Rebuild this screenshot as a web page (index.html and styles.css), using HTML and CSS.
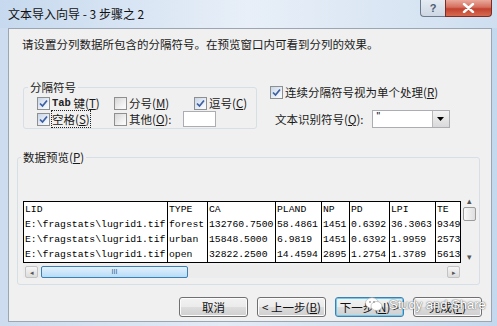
FILE: index.html
```html
<!DOCTYPE html>
<html lang="zh-CN">
<head>
    <meta charset="UTF-8">
    <title>文本导入向导 - 3 步骤之 2</title>
    <link rel="stylesheet" href="styles.css">
</head>
<body>
    <div class="window">
        <div class="titlebar">
            <span class="title">文本导入向导 - 3 步骤之 2</span>
            <div class="caption-buttons">
                <span class="cap-btn help">?</span>
                <span class="cap-btn close">
                    <svg width="13" height="10" viewBox="0 0 13 10"><path d="M2 1 L11 9 M11 1 L2 9" stroke="#fff" stroke-width="2.4" stroke-linecap="round"/></svg>
                </span>
            </div>
        </div>

        <div class="panel">
            <p class="intro">请设置分列数据所包含的分隔符号。在预览窗口内可看到分列的效果。</p>

            <div class="options">
                <!-- Delimiters group -->
                <fieldset class="group delimiters">
                    <legend>分隔符号</legend>
                    <div class="check-grid">
                        <label class="check"><span class="cb on"><svg viewBox="0 0 11 11"><path d="M2 5.5 L4.5 8 L9 2.5" /></svg></span><span class="mono">Tab</span>&nbsp;键(<u>T</u>)</label>
                        <label class="check"><span class="cb"></span>分号(<u>M</u>)</label>
                        <label class="check"><span class="cb on"><svg viewBox="0 0 11 11"><path d="M2 5.5 L4.5 8 L9 2.5" /></svg></span>逗号(<u>C</u>)</label>
                        <label class="check"><span class="cb on"><svg viewBox="0 0 11 11"><path d="M2 5.5 L4.5 8 L9 2.5" /></svg></span><span class="focus">空格(<u>S</u>)</span></label>
                        <label class="check other"><span class="cb"></span>其他(<u>O</u>):<span class="other-input"></span></label>
                    </div>
                </fieldset>

                <div class="right-opts">
                    <label class="check"><span class="cb on"><svg viewBox="0 0 11 11"><path d="M2 5.5 L4.5 8 L9 2.5" /></svg></span>连续分隔符号视为单个处理(<u>R</u>)</label>
                    <div class="qualifier">
                        <span>文本识别符号(<u>Q</u>):</span>
                        <div class="select">
                            <span class="select-value">"</span>
                            <span class="select-btn"><svg width="7" height="4" viewBox="0 0 7 4"><path d="M0 0 H7 L3.5 4 Z" fill="#000"/></svg></span>
                        </div>
                    </div>
                </div>
            </div>

            <!-- Data preview -->
            <fieldset class="group preview">
                <legend>数据预览(<u>P</u>)</legend>
                <div class="preview-body">
                    <table class="data">
                        <colgroup>
                            <col style="width:144px"><col style="width:40px"><col style="width:68px"><col style="width:46px">
                            <col style="width:28px"><col style="width:40px"><col style="width:46px"><col style="width:25px">
                        </colgroup>
                        <tr><td>LID</td><td>TYPE</td><td>CA</td><td>PLAND</td><td>NP</td><td>PD</td><td>LPI</td><td>TE</td></tr>
                        <tr><td>E:\fragstats\lugrid1.tif</td><td>forest</td><td>132760.7500</td><td>58.4861</td><td>1451</td><td>0.6392</td><td>36.3063</td><td>9349</td></tr>
                        <tr><td>E:\fragstats\lugrid1.tif</td><td>urban</td><td>15848.5000</td><td>6.9819</td><td>1451</td><td>0.6392</td><td>1.9959</td><td>2573</td></tr>
                        <tr><td>E:\fragstats\lugrid1.tif</td><td>open</td><td>32822.2500</td><td>14.4594</td><td>2895</td><td>1.2754</td><td>1.3789</td><td>5613</td></tr>
                    </table>
                    <div class="vscroll">
                        <span class="arrow">▴</span>
                        <span class="vthumb"></span>
                        <span class="vspace"></span>
                        <span class="arrow">▾</span>
                    </div>
                    <div class="hscroll">
                        <span class="sbtn">◂</span>
                        <span class="hthumb">III</span>
                        <span class="htrack"></span>
                        <span class="sbtn">▸</span>
                    </div>
                </div>
            </fieldset>

            <div class="buttons">
                <button>取消</button>
                <button>&lt; 上一步(<u>B</u>)</button>
                <button class="default">下一步(<u>N</u>) &gt;</button>
                <button>完成(<u>F</u>)</button>
            </div>
        </div>

        <!-- watermark over the buttons -->
        <div class="watermark">
            <svg width="18" height="15" viewBox="0 0 18 15">
                <ellipse cx="7" cy="6" rx="6.5" ry="5.3" fill="#fff" stroke="#aaa" stroke-width="0.6"/>
                <ellipse cx="11.5" cy="9" rx="5.5" ry="4.5" fill="#fff" stroke="#aaa" stroke-width="0.6"/>
                <circle cx="5" cy="5" r="0.9" fill="#999"/><circle cx="9" cy="5" r="0.9" fill="#999"/>
            </svg>
            <span>Study and Share</span>
        </div>
    </div>
</body>
</html>
```

FILE: styles.css
```css
body {
    margin: 0;
    font-family: "Noto Sans CJK SC", "Noto Sans", sans-serif;
    font-size: 11.5px;
    color: #1a1a1a;
}
.window {
    position: relative;
    width: 497px;
    height: 326px;
    overflow: hidden;
    background: linear-gradient(to right, #cddcee, #e3ebf5 45%, #d2e1f1 80%, #c4d8ee);
}
/* Title bar */
.titlebar {
    height: 28px;
    display: flex;
    align-items: flex-start;
    padding-left: 8px;
    background: linear-gradient(to right, #c6d9ee, #e8eff8 50%, #cfdff0 100%);
}
.title {
    line-height: 28px;
    font-size: 12px;
    color: #111;
}
.caption-buttons {
    display: flex;
    margin-left: auto;
    margin-right: 5px;
}
.cap-btn {
    height: 17px;
    box-sizing: border-box;
    display: flex;
    align-items: center;
    justify-content: center;
    border: 1px solid #6d7a8c;
    border-top: none;
}
.help {
    width: 25px;
    border-radius: 0 0 0 4px;
    border-right: none;
    background: linear-gradient(#e4ebf3, #cdd7e3);
    color: #4d5d70;
    font-family: "Liberation Sans", sans-serif;
    font-size: 11px;
    font-weight: bold;
}
.close {
    width: 47px;
    border-radius: 0 0 4px 0;
    border-color: #7b2d25;
    background: linear-gradient(#e9a99c, #d56f5d 45%, #c2422f 55%, #d66a50);
}
/* Dialog panel */
.panel {
    margin-left: 8px;
    width: 484px;
    height: 294px;
    box-sizing: border-box;
    border: 1px solid #9aa6b4;
    background-color: #f0f0f0;
}
.intro {
    margin: 0;
    padding: 8px 0 0 13px;
    line-height: 14px;
}
.options {
    display: flex;
    margin-top: 29px;
}
.group {
    border: 1px solid #d5dfe5;
    border-radius: 3px;
    margin: 0;
    min-width: 0;
}
.group legend {
    padding: 0 2px;
    line-height: 14px;
}
.delimiters {
    width: 234px;
    box-sizing: border-box;
    margin-left: 14px;
    padding: 1px 0 1px 13px;
}
.delimiters legend {
    margin-left: -9px;
}
.check-grid {
    display: grid;
    grid-template-columns: 77px 80px 60px;
    grid-auto-rows: 16px;
}
.check {
    display: flex;
    align-items: center;
    white-space: nowrap;
}
.check.other {
    grid-column: span 2;
}
.cb {
    width: 13px;
    height: 13px;
    box-sizing: border-box;
    border: 1px solid #8e8f8f;
    background: linear-gradient(135deg, #d6d6d6, #f8f8f8 80%);
    margin-right: 2px;
    flex: none;
}
.cb.on {
    background: linear-gradient(135deg, #c9d6e8, #f4f7fb 80%);
}
.cb svg {
    display: block;
    width: 11px;
    height: 11px;
}
.cb path {
    fill: none;
    stroke: #3b5fa3;
    stroke-width: 1.7;
}
.mono {
    font-family: "Liberation Mono", monospace;
    font-size: 10.5px;
    font-weight: bold;
    color: #222;
}
.focus {
    outline: 1px dotted #222;
    outline-offset: 0;
}
.other-input {
    display: inline-block;
    flex: none;
    width: 33px;
    height: 16px;
    box-sizing: border-box;
    margin-left: 11px;
    border: 1px solid #abadb3;
    background: #fff;
}
.right-opts {
    margin-left: 13px;
    padding-top: 4px;
}
.right-opts .check {
    height: 16px;
}
.qualifier {
    display: flex;
    align-items: center;
    margin-top: 10px;
    padding-left: 5px;
}
.select {
    display: flex;
    width: 78px;
    height: 18px;
    box-sizing: border-box;
    margin-left: 8px;
    border: 1px solid #abadb3;
    background: #fff;
}
.select-value {
    flex: 1;
    padding-left: 4px;
    line-height: 12px;
    font-family: "Liberation Sans", sans-serif;
    font-size: 10px;
    color: #000;
}
.select-btn {
    width: 16px;
    display: flex;
    align-items: center;
    justify-content: center;
    border-left: 1px solid #b8b8b8;
    background: linear-gradient(#f3f3f3, #d9d9d9);
}
/* Preview */
.preview {
    width: 463px;
    box-sizing: border-box;
    margin: 21px 0 0 8px;
    padding: 31px 0 6px 5px;
}
.preview legend {
    margin-left: -2px;
}
.preview-body {
    display: grid;
    grid-template-columns: 437px 16px;
    column-gap: 1px;
    row-gap: 2px;
}
.data {
    width: 437px;
    margin-top: 6px;
    table-layout: fixed;
    border-collapse: collapse;
    border: 1px solid #000;
    background: #fff;
    font-family: "Liberation Mono", monospace;
    font-size: 9.75px;
    color: #000;
}
.data td {
    height: 15px;
    padding: 0 0 0 1px;
    border-left: 1px solid #000;
    white-space: nowrap;
    overflow: hidden;
    line-height: 15px;
}
.vscroll {
    display: flex;
    flex-direction: column;
    align-items: center;
}
.arrow {
    font-size: 9px;
    line-height: 12px;
    color: #555;
}
.vthumb {
    width: 13px;
    height: 14px;
    box-sizing: border-box;
    border: 1px solid #9b9b9b;
    border-radius: 2px;
    background: linear-gradient(to right, #fafafa, #dedede);
}
.vspace {
    flex: 1;
}
.hscroll {
    display: flex;
    align-items: center;
    height: 13px;
    padding-left: 2px;
    background: #ececec;
}
.sbtn {
    width: 13px;
    height: 12px;
    box-sizing: border-box;
    border: 1px solid #c3c3c3;
    border-radius: 2px;
    background: linear-gradient(#f6f6f6, #dcdcdc);
    font-size: 7px;
    line-height: 10px;
    text-align: center;
    color: #555;
}
.hthumb {
    width: 147px;
    height: 12px;
    box-sizing: border-box;
    margin-left: 3px;
    border: 1px solid #3c7fb1;
    border-radius: 2px;
    background: linear-gradient(#e3f1fc, #b6dcf7);
    font-family: "Liberation Sans", sans-serif;
    font-size: 7px;
    line-height: 10px;
    text-align: center;
    color: #2c628b;
}
.htrack {
    flex: 1;
}
/* Buttons */
.buttons {
    display: flex;
    justify-content: flex-end;
    gap: 9px;
    margin-top: 12px;
    padding-right: 9px;
}
button {
    width: 69px;
    height: 20px;
    padding: 0;
    font-family: inherit;
    font-size: 11.5px;
    color: #111;
    border: 1px solid #707070;
    border-radius: 3px;
    background: linear-gradient(#f2f2f2, #ebebeb 50%, #dddddd 51%, #cfcfcf);
    box-shadow: inset 0 0 0 1px #fcfcfc;
}
button.default {
    border-color: #3c7fb1;
    box-shadow: inset 0 0 0 1px #6fcaf0;
}
button u, .check u, legend u, .qualifier u {
    text-decoration: underline;
}
.watermark {
    position: absolute;
    left: 365px;
    top: 297px;
    display: flex;
    align-items: center;
    gap: 6px;
    font-family: "Liberation Sans", sans-serif;
    font-size: 13px;
    color: #fff;
    text-shadow: 0 0 2px #777, 0 0 1px #555;
}
```
